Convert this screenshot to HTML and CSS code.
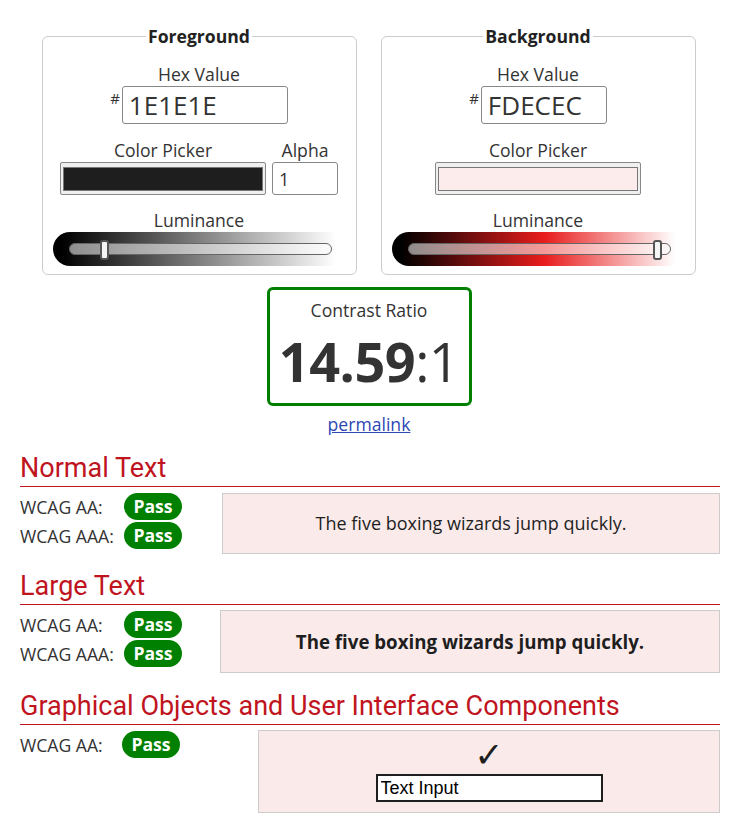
FILE: index.html
```html
<!DOCTYPE html>
<html lang="en">
<head>
<meta charset="utf-8">
<title>Contrast Checker</title>
<link rel="stylesheet" href="styles.css">
</head>
<body>
<main class="page">
  <div class="pickers">
    <fieldset class="panel">
      <legend>Foreground</legend>
      <div class="label">Hex Value</div>
      <div class="hexrow"><span class="hash">#</span><input class="hex hex-fg" type="text" value="1E1E1E"></div>
      <div class="pickrow">
        <div class="col">
          <div class="label">Color Picker</div>
          <div class="swatch"><div class="swatch-in fg"></div></div>
        </div>
        <div class="col">
          <div class="label">Alpha</div>
          <input class="alpha" type="text" value="1">
        </div>
      </div>
      <div class="label">Luminance</div>
      <div class="lum lum-fg"><div class="track"><span class="thumb" style="left:30px"></span></div></div>
    </fieldset>
    <fieldset class="panel">
      <legend>Background</legend>
      <div class="label">Hex Value</div>
      <div class="hexrow"><span class="hash">#</span><input class="hex hex-bg" type="text" value="FDECEC"></div>
      <div class="pickrow">
        <div class="col">
          <div class="label">Color Picker</div>
          <div class="swatch"><div class="swatch-in bg"></div></div>
        </div>
      </div>
      <div class="label">Luminance</div>
      <div class="lum lum-bg"><div class="track"><span class="thumb" style="left:244px"></span></div></div>
    </fieldset>
  </div>

  <div class="ratio">
    <div class="ratio-label">Contrast Ratio</div>
    <div class="ratio-value"><b>14.59</b>:1</div>
  </div>
  <div class="permalink"><a href="#">permalink</a></div>

  <section class="sec sec-normal">
    <h2>Normal Text</h2>
    <div class="body">
      <div class="results">
        <span class="lbl">WCAG AA:</span><span class="pass">Pass</span>
        <span class="lbl">WCAG AAA:</span><span class="pass">Pass</span>
      </div>
      <div class="sample">The five boxing wizards jump quickly.</div>
    </div>
  </section>

  <section class="sec sec-large">
    <h2>Large Text</h2>
    <div class="body">
      <div class="results">
        <span class="lbl">WCAG AA:</span><span class="pass">Pass</span>
        <span class="lbl">WCAG AAA:</span><span class="pass">Pass</span>
      </div>
      <div class="sample sample-large">The five boxing wizards jump quickly.</div>
    </div>
  </section>

  <section class="sec sec-ui">
    <h2>Graphical Objects and User Interface Components</h2>
    <div class="body">
      <div class="results">
        <span class="lbl">WCAG AA:</span><span class="pass">Pass</span>
      </div>
      <div class="sample sample-ui">
        <div class="check">✓</div>
        <input class="textinput" type="text" value="Text Input">
      </div>
    </div>
  </section>
</main>
</body>
</html>
```

FILE: styles.css
```css
* { box-sizing: border-box; }
body {
  margin: 0;
  background: #fff;
  color: #333;
  font-family: "Open Sans", "Liberation Sans", sans-serif;
  font-size: 17.6px;
}
.page { padding: 24px 16px 0 20px; }

.pickers {
  display: flex;
  justify-content: center;
  gap: 24px;
  margin-left: -20px;
  margin-right: -16px;
  padding-left: 1px;
}
.panel {
  width: 315px;
  margin: 0;
  border: 1px solid #ccc;
  border-radius: 6px;
  padding: 14px 0 8px;
  display: flex;
  flex-direction: column;
  align-items: center;
}
.panel legend {
  font-weight: 700;
  font-size: 17.6px;
  line-height: 24px;
  padding: 0 2px;
  margin: 0 auto;
  color: #222;
}
.label {
  line-height: 24px;
  text-align: center;
  color: #333;
}
.hexrow {
  display: flex;
  align-items: flex-start;
  margin-bottom: 14px;
}
.hash {
  font-size: 15px;
  line-height: 20px;
  margin-right: 2px;
  margin-top: 2px;
}
.hex {
  height: 38px;
  border: 1px solid #888;
  border-radius: 3px;
  font-family: "Open Sans", sans-serif;
  font-size: 26px;
  color: #333;
  padding: 0 0 0 6px;
  background: #fff;
}
.hex-fg { width: 166px; }
.hex-bg { width: 126px; }
.pickrow {
  display: flex;
  gap: 6px;
  margin-bottom: 13px;
}
.col { display: flex; flex-direction: column; align-items: center; }
.swatch {
  width: 206px;
  height: 33px;
  border: 1px solid #888;
  border-radius: 2px;
  background: #efefef;
  padding: 4px 2px 3px;
}
.swatch-in { height: 100%; border: 1px solid #777; }
.swatch-in.fg { background: #1e1e1e; }
.swatch-in.bg { background: #fdecec; }
.alpha {
  width: 66px;
  height: 33px;
  border: 1px solid #888;
  border-radius: 3px;
  font-family: "Open Sans", sans-serif;
  font-size: 18px;
  color: #333;
  padding: 0 0 0 6px;
  background: #fff;
}
.lum {
  width: 292px;
  height: 34px;
  border-radius: 17px;
  padding: 11px 13px 11px 16px;
}
.lum-fg { background: linear-gradient(to right, #000 3%, #fff 97%); }
.lum-bg { background: linear-gradient(to right, #000 3%, #e81c1c 52%, #fff 97%); }
.track {
  position: relative;
  height: 12px;
  border: 1px solid #666;
  border-radius: 6px;
  background: rgba(255,255,255,0.55);
}
.thumb {
  position: absolute;
  top: -4px;
  width: 9px;
  height: 20px;
  background: #f4f4f4;
  border: 2px solid #555;
  border-radius: 3px;
}

.ratio {
  width: 205px;
  height: 119px;
  margin: 12px auto 0;
  border: 3px solid #008000;
  border-radius: 6px;
  text-align: center;
  padding-top: 8px;
  position: relative;
  left: -1px;
}
.ratio-label { line-height: 24px; color: #333; }
.ratio-value {
  font-size: 54px;
  line-height: 79px;
  color: #333;
  letter-spacing: -0.5px;
}
.ratio-value b { font-weight: 700; }
.permalink {
  text-align: center;
  line-height: 24px;
  margin-top: 6px;
  position: relative;
  left: -1px;
}
.permalink a { color: #2d47b5; }

.sec h2 {
  font-family: Roboto, "Liberation Sans", sans-serif;
  font-weight: 400;
  font-size: 27px;
  line-height: 30px;
  color: #c0141e;
  margin: 17px 0 0;
  padding-bottom: 3px;
  border-bottom: 1px solid #c0141e;
}
.sec-large h2 { margin-top: 17px; }
.sec-ui h2 { margin-top: 18px; }
.body {
  display: flex;
  align-items: flex-start;
  margin-top: 5px;
}
.results {
  display: grid;
  grid-template-columns: 104px auto;
  grid-auto-rows: 29px;
  align-items: center;
}
.lbl { color: #333; }
.pass {
  display: inline-block;
  width: 58px;
  height: 27px;
  line-height: 27px;
  border-radius: 14px;
  background: #008000;
  color: #fff;
  font-weight: 700;
  text-align: center;
}
.sample {
  flex: 1;
  background: #fbeaea;
  border: 1px solid #ccc;
  color: #1e1e1e;
  text-align: center;
}
.sec-normal .sample {
  margin-left: 40px;
  height: 61px;
  line-height: 59px;
  margin-top: 1px;
  font-size: 18px;
}
.sec-large .sample {
  margin-left: 38px;
  height: 63px;
  line-height: 61px;
  font-weight: 700;
  font-size: 18.7px;
}
.sec-ui .results { grid-template-columns: 102px auto; }
.sec-ui .sample {
  margin-left: 78px;
  height: 83px;
  padding-top: 8px;
  display: flex;
  flex-direction: column;
  align-items: center;
}
.check {
  font-family: "DejaVu Sans", sans-serif;
  font-size: 35px;
  line-height: 32px;
  color: #1e1e1e;
  height: 32px;
}
.textinput {
  width: 227px;
  height: 28px;
  margin-top: 3px;
  border: 2px solid #1e1e1e;
  background: #fff;
  font-family: "Liberation Sans", Arial, sans-serif;
  font-size: 18px;
  color: #000;
  padding: 0 3px;
}
```
